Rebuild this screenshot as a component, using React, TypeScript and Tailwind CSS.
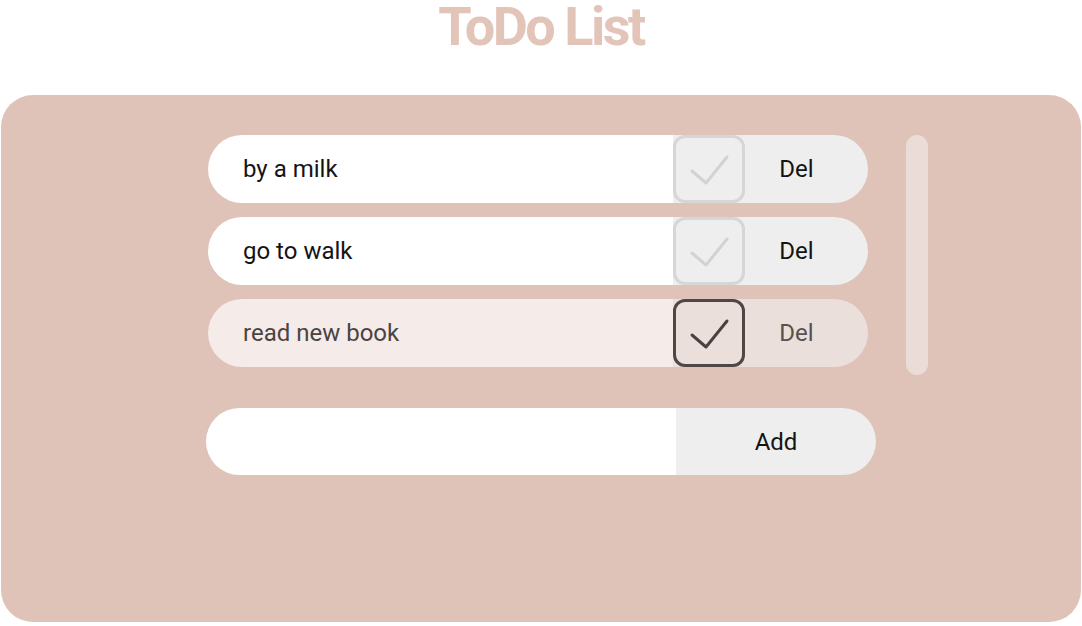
import React from 'react';

type Todo = { id: number; text: string; done: boolean };

const todos: Todo[] = [
  { id: 1, text: 'by a milk', done: false },
  { id: 2, text: 'go to walk', done: false },
  { id: 3, text: 'read new book', done: true },
];

function CheckMark({ color }: { color: string }) {
  return (
    <svg width="44" height="36" viewBox="0 0 44 36" fill="none">
      <path d="M5 20 L19 32 L40 6" stroke={color} strokeWidth="3" strokeLinecap="round" strokeLinejoin="round" />
    </svg>
  );
}

function TodoRow({ todo }: { todo: Todo }) {
  return (
    <div className="flex h-[68px] w-[660px] overflow-hidden rounded-full">
      <div
        className={`flex flex-1 items-center pl-[35px] text-[24px] ${
          todo.done ? 'bg-[#f5ebe8] text-[#4b4343]' : 'bg-white text-[#141414]'
        }`}
      >
        {todo.text}
      </div>
      <div className={`flex ${todo.done ? 'bg-[#ebdfdc]' : 'bg-[#eeeeee]'}`}>
        <div
          className={`flex h-[68px] w-[72px] items-center justify-center rounded-[12px] border-[3px] ${
            todo.done ? 'border-[#4f4646]' : 'border-[#d6d6d6]'
          }`}
        >
          <CheckMark color={todo.done ? '#4a4242' : '#d2d2d2'} />
        </div>
        <button
          className={`flex w-[123px] items-center justify-center pr-[20px] text-[24px] ${
            todo.done ? 'text-[#5a5050]' : 'text-[#141414]'
          }`}
        >
          Del
        </button>
      </div>
    </div>
  );
}

export default function App() {
  return (
    <div className="min-h-[626px] bg-white font-['Roboto',sans-serif]">
      <h1 className="pt-[4px] pb-[45px] text-center text-[54px] font-bold leading-[46px] tracking-[-2.5px] text-[#e2c4b9]">ToDo List</h1>
      <div className="mx-[1px] flex h-[527px] flex-col rounded-[32px] bg-[#dfc2b8] pt-[40px]">
        <div className="flex gap-[38px] pl-[207px]">
          <div className="flex h-[240px] flex-col gap-[14px]">
            {todos.map((t) => (
              <TodoRow key={t.id} todo={t} />
            ))}
          </div>
          <div className="h-[240px] w-[22px] rounded-full bg-[#ecdcd7]" />
        </div>
        <div className="ml-[205px] mt-[33px] flex h-[67px] w-[670px] overflow-hidden rounded-full">
          <input className="flex-1 bg-white px-[35px] text-[24px] outline-none" />
          <button className="w-[200px] bg-[#eeeeee] text-[24px] text-[#141414]">Add</button>
        </div>
      </div>
    </div>
  );
}
